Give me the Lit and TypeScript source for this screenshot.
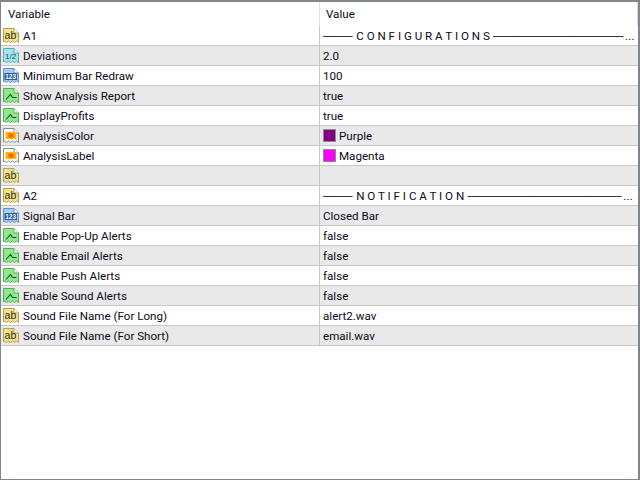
import { LitElement, html, css, svg } from "lit";
import { customElement } from "lit/decorators.js";

type Kind = "ab" | "half" | "num" | "bool" | "color";
interface Row { k: Kind; n: string; v: string; c?: string; mid?: string; tail?: string; }

const ROWS: Row[] = [
  { k: "ab", n: "A1", v: "-".repeat(11), mid: "C O N F I G U R A T I O N S", tail: "-".repeat(49) },
  { k: "half", n: "Deviations", v: "2.0" },
  { k: "num", n: "Minimum Bar Redraw", v: "100" },
  { k: "bool", n: "Show Analysis Report", v: "true" },
  { k: "bool", n: "DisplayProfits", v: "true" },
  { k: "color", n: "AnalysisColor", v: "Purple", c: "#800080" },
  { k: "color", n: "AnalysisLabel", v: "Magenta", c: "#ff00ff" },
  { k: "ab", n: "", v: "" },
  { k: "ab", n: "A2", v: "-".repeat(11), mid: "N O T I F I C A T I O N", tail: "-".repeat(58) },
  { k: "num", n: "Signal Bar", v: "Closed Bar" },
  { k: "bool", n: "Enable Pop-Up Alerts", v: "false" },
  { k: "bool", n: "Enable Email Alerts", v: "false" },
  { k: "bool", n: "Enable Push Alerts", v: "false" },
  { k: "bool", n: "Enable Sound Alerts", v: "false" },
  { k: "ab", n: "Sound File Name (For Long)", v: "alert2.wav" },
  { k: "ab", n: "Sound File Name (For Short)", v: "email.wav" },
];

const PAL: Record<string, [string, string, string]> = {
  ab: ["#f3e38f", "#b0a050", "#2b2b10"],
  half: ["#a6e4ee", "#5aa8b8", "#14505f"],
  num: ["#a9cdf0", "#5f8fc5", "#ffffff"],
  bool: ["#8fe88f", "#55ad5c", "#0d5a17"],
  color: ["#fafafa", "#8a8a8a", "#000000"],
};

const SHEET = "M0.5 1.5H11L15.5 6V15.5L13.5 14L11.5 15.5L9.5 14L7.5 15.5L5.5 14L3.5 15.5L1.5 14L0.5 15Z";

function icon(k: Kind) {
  const [fill, stroke, ink] = PAL[k];
  let inner = svg``;
  if (k === "ab") inner = svg`<text x="1.6" y="11.8" class="ab" fill=${ink}>ab</text>`;
  if (k === "half") inner = svg`<text x="2" y="11.5" class="half" fill=${ink}>1/2</text>`;
  if (k === "num")
    inner = svg`<rect x="1.5" y="6" width="12.5" height="7" fill="#2a5c9e"></rect><text x="2.2" y="12" class="num" fill=${ink}>123</text>`;
  if (k === "bool")
    inner = svg`<path d="M3 12.5L7.5 7.5L9.5 10.5H13.5" fill="none" stroke=${ink} stroke-width="1.1" stroke-linejoin="miter"></path>`;
  if (k === "color")
    inner = svg`<rect x="2.5" y="5" width="11" height="7" fill="#ffb400"></rect><rect x="5.5" y="6.5" width="5" height="4" fill="#ff6000"></rect>`;
  return html`<svg class="ico" width="16" height="17" viewBox="0 0 16 17">
    <path d=${SHEET} fill=${fill} stroke=${stroke}></path>
    <path d="M11 1.5V6H15.5" fill="#fff" stroke=${stroke}></path>
    ${inner}
  </svg>`;
}

@customElement("app-root")
export class AppRoot extends LitElement {
  static styles = css`
    :host {
      display: block;
      width: 640px;
      height: 480px;
      box-sizing: border-box;
      border: 1px solid #7f868c;
      border-width: 2px 2px 1px 1px;
      background: #fff;
      font-family: Roboto, "Liberation Sans", Arial, sans-serif;
      font-size: 11.6px;
      color: #0a0a20;
      overflow: hidden;
    }
    .head, .row {
      display: grid;
      grid-template-columns: 318px 1fr;
    }
    .head {
      height: 24px;
      align-items: center;
      border-right: 1px solid #e0e0e0;
    }
    .head .a { padding-left: 7px; }
    .head .b {
      height: 100%;
      display: flex;
      align-items: center;
      padding-left: 6px;
      border-left: 1px solid #e2e2e2;
    }
    .row {
      height: 20px;
      box-sizing: border-box;
      border-bottom: 1px solid #c8c8c8;
    }
    .row.alt { background: #e9e9e9; }
    .name {
      display: flex;
      align-items: center;
      gap: 4px;
      padding-left: 2px;
      white-space: nowrap;
    }
    .ico { flex: none; }
    .val {
      display: flex;
      align-items: center;
      gap: 3px;
      padding-left: 3px;
      border-left: 1px solid #c8c8c8;
      white-space: nowrap;
      min-width: 0;
    }
    .sw {
      flex: none;
      width: 11px;
      height: 11px;
      border: 1px solid #8c8c8c;
    }
    .dash { letter-spacing: -0.55px; }
    .mid { margin-left: 1px; }
    .more { letter-spacing: 0.2px; margin-left: -1px; }
    text { font-family: "Liberation Sans", Arial, sans-serif; }
    .ab { font-size: 10.5px; }
    .half { font-size: 8px; }
    .num { font-size: 6.5px; font-weight: bold; }
  `;

  private value(r: Row) {
    if (r.mid) {
      return html`<span class="dash">${r.v}</span><span class="mid">${r.mid}</span><span class="dash">${r.tail}</span><span class="more">...</span>`;
    }
    return html`${r.c ? html`<span class="sw" style="background:${r.c}"></span>` : ""}<span>${r.v}</span>`;
  }

  render() {
    return html`
      <div class="head"><div class="a">Variable</div><div class="b">Value</div></div>
      ${ROWS.map(
        (r, i) => html`<div class="row ${i % 2 === 1 ? "alt" : ""}">
          <div class="name">${icon(r.k)}<span>${r.n}</span></div>
          <div class="val">${this.value(r)}</div>
        </div>`
      )}
    `;
  }
}
